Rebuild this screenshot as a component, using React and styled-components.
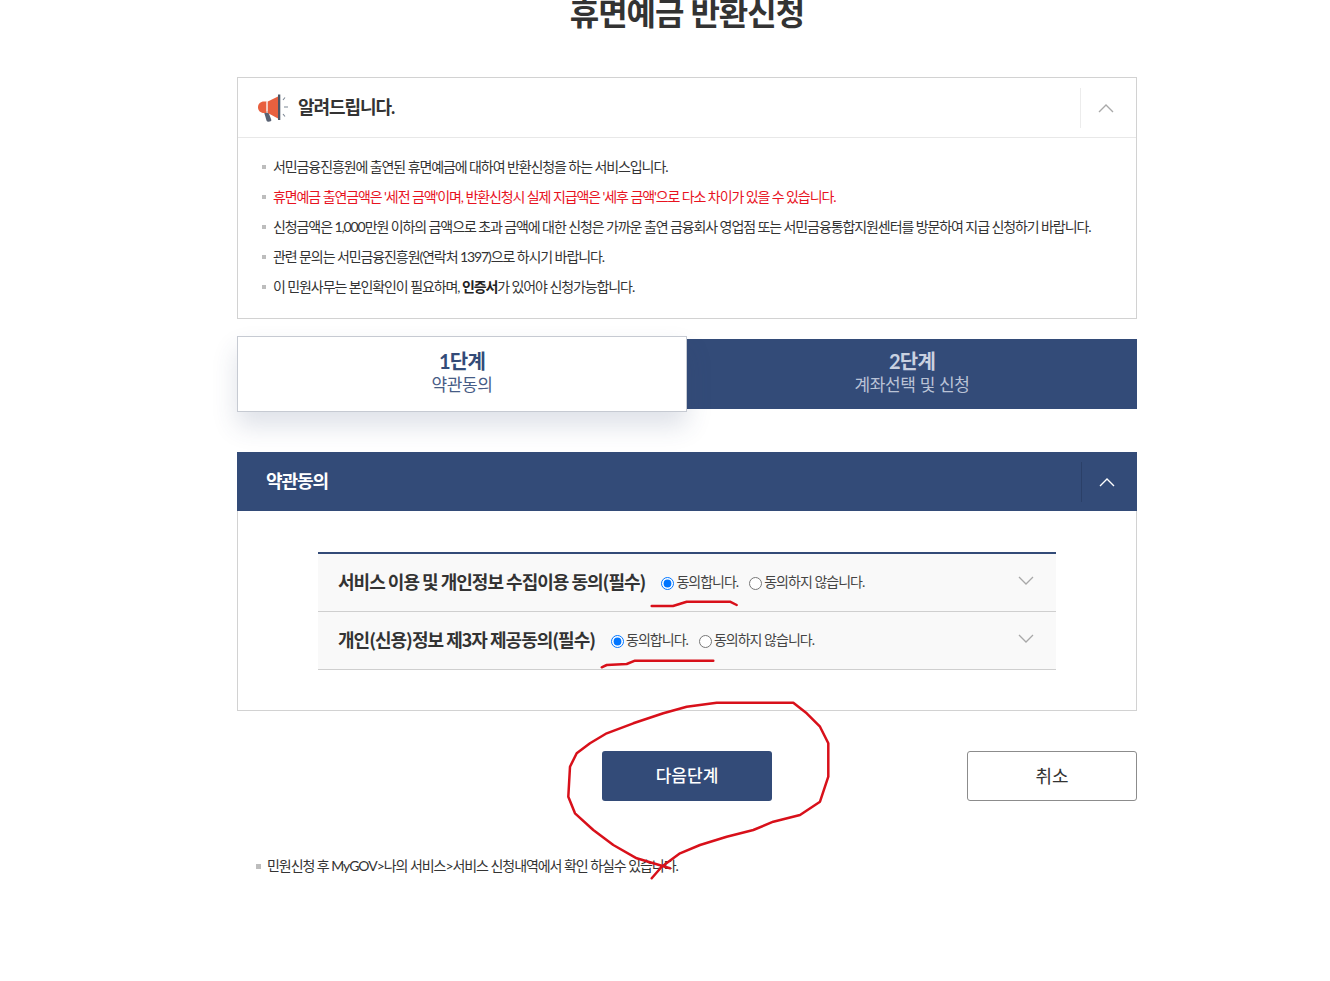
import { createGlobalStyle, styled } from 'styled-components'

const NAVY = '#334b78'
const FONT = `Lato, "Noto Sans CJK KR", sans-serif`
const KR_FONT = `"Noto Sans CJK KR", sans-serif`

const notices = [
  { id: 1, text: '서민금융진흥원에 출연된 휴면예금에 대하여 반환신청을 하는 서비스입니다.' },
  { id: 2, text: "휴면예금 출연금액은 '세전 금액'이며, 반환신청시 실제 지급액은 '세후 금액'으로 다소 차이가 있을 수 있습니다.", alert: true },
  { id: 3, text: '신청금액은 1,000만원 이하의 금액으로 초과 금액에 대한 신청은 가까운 출연 금융회사 영업점 또는 서민금융통합지원센터를 방문하여 지급 신청하기 바랍니다.' },
  { id: 4, text: '관련 문의는 서민금융진흥원(연락처 1397)으로 하시기 바랍니다.' },
]

const agreements = [
  { name: 'agree1', title: '서비스 이용 및 개인정보 수집이용 동의(필수)' },
  { name: 'agree2', title: '개인(신용)정보 제3자 제공동의(필수)' },
]

const Chevron = ({ color }) => (
  <svg width="16" height="10" viewBox="0 0 16 10" fill="none" stroke={color} strokeWidth="1.4">
    <path d="M1 9 8 2l7 7" />
  </svg>
)

const ChevronDown = () => (
  <svg width="16" height="10" viewBox="0 0 16 10" fill="none" stroke="#a8a8a8" strokeWidth="1.3">
    <path d="M1 1l7 7 7-7" />
  </svg>
)

const Megaphone = () => (
  <svg width="32" height="30" viewBox="0 0 32 30" fill="none">
    <path d="M7 19l4-1 3.200 8.500c.4 1.200-.3 1.900-1.400 2.100l-1.600.2c-.9 0-1.400-.4-1.700-1.200z" fill="#596273" />
    <path d="M7 8.500h2.500V20H7c-3.500 0-6-2.400-6-5.800S3.500 8.500 7 8.500z" fill="#e8603f" />
    <path d="M9.500 8.500h1.300V20H9.500z" fill="#f7e3dc" />
    <path d="M10.800 8.500 21 3.500v22L10.800 20z" fill="#e8603f" />
    <path d="M21 1.500h2.300V27H21z" fill="#4c5565" />
    <path d="M26 7l2-2.500M27 14h4M26 21l2 2.500" stroke="#7d8794" strokeWidth="1.100" />
  </svg>
)

const Annotations = () => (
  <Scribble viewBox="0 0 1330 981">
    <path d="M651.700 878.300 661.700 866.700 680 853.300 700 845 726.700 836.700 753.300 830 773.300 821.700 800 815 820 801.700 828.300 776.700 828.300 743.300 820 726.700 806.700 713.300 793.300 702.700 716.700 702.700 686.700 706.700 663.300 713.300 633.300 723.300 606.700 733.300 590 743.300 576.700 753.300 570 766.700 568.300 796.700 575 813.300 593.300 830 613.300 845 636.700 858.300 670 868.300" />
    <path d="M651.700 606 673 606 686.700 601.700 730 601.700 736.700 605" />
    <path d="M601.700 667.300 606.700 665 626.700 664 635 660.700 713.300 660.700" />
  </Scribble>
)

const App = () => {
  return (
    <>
      <GlobalStyle />
      <Page>
        <Title>휴면예금 반환신청</Title>

        <NoticeBox>
          <NoticeHead>
            <NoticeHeading>
              <Megaphone />
              <span>알려드립니다.</span>
            </NoticeHeading>
            <Toggle>
              <Chevron color="#a9a9a9" />
            </Toggle>
          </NoticeHead>
          <NoticeList>
            {notices.map((item) => (
              <NoticeItem key={item.id} $alert={item.alert}>
                {item.text}
              </NoticeItem>
            ))}
            <NoticeItem>
              이 민원사무는 본인확인이 필요하며, <strong>인증서</strong>가 있어야 신청가능합니다.
            </NoticeItem>
          </NoticeList>
        </NoticeBox>

        <Steps>
          <ActiveStep>
            <StepNumber>1단계</StepNumber>
            <StepName>약관동의</StepName>
          </ActiveStep>
          <Step>
            <StepNumber>2단계</StepNumber>
            <StepName>계좌선택 및 신청</StepName>
          </Step>
        </Steps>

        <SectionHead>
          <SectionTitle>약관동의</SectionTitle>
          <SectionToggle>
            <Chevron color="#ffffff" />
          </SectionToggle>
        </SectionHead>
        <SectionBody>
          <AgreeTable>
            {agreements.map((row) => (
              <AgreeRow key={row.name}>
                <AgreeTitle>{row.title}</AgreeTitle>
                <RadioLabel>
                  <input type="radio" name={row.name} defaultChecked />
                  동의합니다.
                </RadioLabel>
                <RadioLabel>
                  <input type="radio" name={row.name} />
                  동의하지 않습니다.
                </RadioLabel>
                <RowArrow>
                  <ChevronDown />
                </RowArrow>
              </AgreeRow>
            ))}
          </AgreeTable>
        </SectionBody>

        <Actions>
          <NextButton>다음단계</NextButton>
          <CancelButton>취소</CancelButton>
        </Actions>

        <FootNote>민원신청 후 MyGOV&gt;나의 서비스&gt;서비스 신청내역에서 확인 하실수 있습니다.</FootNote>
      </Page>
      <Annotations />
    </>
  )
}
export default App

const GlobalStyle = createGlobalStyle`
  html, body {
    margin: 0;
    background: #fff;
    overflow: hidden;
  }
  body {
    font-family: ${FONT};
    color: #333;
  }
`

const Page = styled.main`
  width: 900px;
  height: 981px;
  margin-left: 237px;
`

const Title = styled.h1`
  margin: -12px 0 0;
  height: 89px;
  font-size: 32px;
  line-height: 50px;
  font-weight: 700;
  letter-spacing: -0.03em;
  text-align: center;
  color: #333;
`

const NoticeBox = styled.section`
  border: 1px solid #d2d2d2;
  height: 242px;
  box-sizing: border-box;
`

const NoticeHead = styled.div`
  display: flex;
  align-items: center;
  justify-content: space-between;
  height: 59px;
  padding: 0 8px 0 19px;
  border-bottom: 1px solid #e8e8e8;
`

const NoticeHeading = styled.h2`
  display: flex;
  align-items: center;
  gap: 9px;
  margin: 0;
  font-size: 18px;
  font-weight: 700;
  letter-spacing: -0.06em;

  span {
    margin-bottom: 3px;
  }
`

const Toggle = styled.div`
  display: flex;
  align-items: center;
  justify-content: center;
  box-sizing: border-box;
  width: 48px;
  height: 40px;
  padding-left: 2px;
  border-left: 1px solid #ececec;
`

const NoticeList = styled.ul`
  margin: 0;
  padding: 14px 24px 0;
  list-style: none;
`

const NoticeItem = styled.li`
  height: 30px;
  font-size: 14px;
  line-height: 30px;
  letter-spacing: -0.078em;
  white-space: nowrap;
  color: ${(props) => (props.$alert ? '#e8131f' : '#333')};

  &::before {
    content: '';
    display: inline-block;
    width: 4px;
    height: 4px;
    margin-right: 7px;
    vertical-align: 3px;
    background: #bdbdbd;
  }

  strong {
    font-weight: 700;
    color: #222;
  }
`

const Steps = styled.div`
  display: flex;
  align-items: center;
  height: 70px;
  margin: 20px 0 43px;
`

const Step = styled.div`
  flex: 0 0 50%;
  display: flex;
  flex-direction: column;
  align-items: center;
  justify-content: center;
  height: 70px;
  padding-bottom: 4px;
  box-sizing: border-box;
  background: ${NAVY};
  color: #c9d1e0;
`

const ActiveStep = styled(Step)`
  height: 76px;
  border: 1px solid #c6cad2;
  background: #fff;
  color: ${NAVY};
  box-shadow: 0 14px 24px rgba(50, 70, 110, 0.16);
  position: relative;
`

const StepNumber = styled.strong`
  font-size: 20px;
  line-height: 25px;
  font-weight: 700;
  letter-spacing: -0.04em;
`

const StepName = styled.span`
  font-size: 17px;
  line-height: 22px;
  letter-spacing: -0.02em;
  opacity: 0.9;
`

const SectionHead = styled.div`
  display: flex;
  align-items: center;
  justify-content: space-between;
  height: 59px;
  padding: 0 8px 0 29px;
  background: ${NAVY};
`

const SectionTitle = styled.h2`
  margin: 0 0 3px;
  font-size: 18px;
  font-weight: 700;
  letter-spacing: -0.06em;
  color: #fff;
`

const SectionToggle = styled(Toggle)`
  border-left: 1px solid #2b4068;
`

const SectionBody = styled.div`
  height: 200px;
  box-sizing: border-box;
  padding: 41px 80px 0;
  border: 1px solid #d2d2d2;
  border-top: 0;
`

const AgreeTable = styled.div`
  border-top: 2px solid ${NAVY};
`

const AgreeRow = styled.div`
  display: flex;
  align-items: center;
  gap: 11px;
  height: 58px;
  box-sizing: border-box;
  padding: 0 22px 0 20px;
  background: #f9f9f9;
  border-bottom: 1px solid #cfcfcf;
`

const AgreeTitle = styled.h3`
  margin: 0 5px 3px 0;
  font-family: ${KR_FONT};
  font-size: 18px;
  font-weight: 700;
  letter-spacing: -0.055em;
  color: #333;
`

const RadioLabel = styled.label`
  display: flex;
  align-items: center;
  margin-bottom: 4px;
  font-size: 14px;
  letter-spacing: -0.07em;
  color: #444;

  input {
    width: 13px;
    height: 13px;
    margin: 6px 2px 0 0;
  }
`

const RowArrow = styled.div`
  display: flex;
  margin: -4px 0 0 auto;
`

const Actions = styled.div`
  display: grid;
  grid-template-columns: 1fr 170px 1fr;
  margin-top: 40px;
`

const NextButton = styled.button`
  grid-column: 2;
  height: 50px;
  padding-bottom: 4px;
  border: 0;
  border-radius: 3px;
  background: ${NAVY};
  color: #fff;
  font-family: ${FONT};
  font-size: 17px;
  font-weight: 500;
  letter-spacing: 0;
`

const CancelButton = styled.button`
  grid-column: 3;
  justify-self: end;
  width: 170px;
  height: 50px;
  padding-bottom: 4px;
  border: 1px solid #8c8c8c;
  border-radius: 3px;
  background: #fff;
  color: #333;
  font-family: ${FONT};
  font-size: 18px;
`

const FootNote = styled.p`
  display: flex;
  align-items: center;
  margin: 54px 0 0 19px;
  font-size: 14px;
  line-height: 22px;
  letter-spacing: -0.075em;
  white-space: pre;

  &::before {
    content: '';
    width: 5px;
    height: 5px;
    margin-right: 6px;
    background: #bdbdbd;
  }
`

const Scribble = styled.svg`
  position: absolute;
  left: 0;
  top: 0;
  width: 1330px;
  height: 981px;
  pointer-events: none;

  path {
    fill: none;
    stroke: #d8101a;
    stroke-width: 2.500;
    stroke-linejoin: round;
    stroke-linecap: round;
  }
`
